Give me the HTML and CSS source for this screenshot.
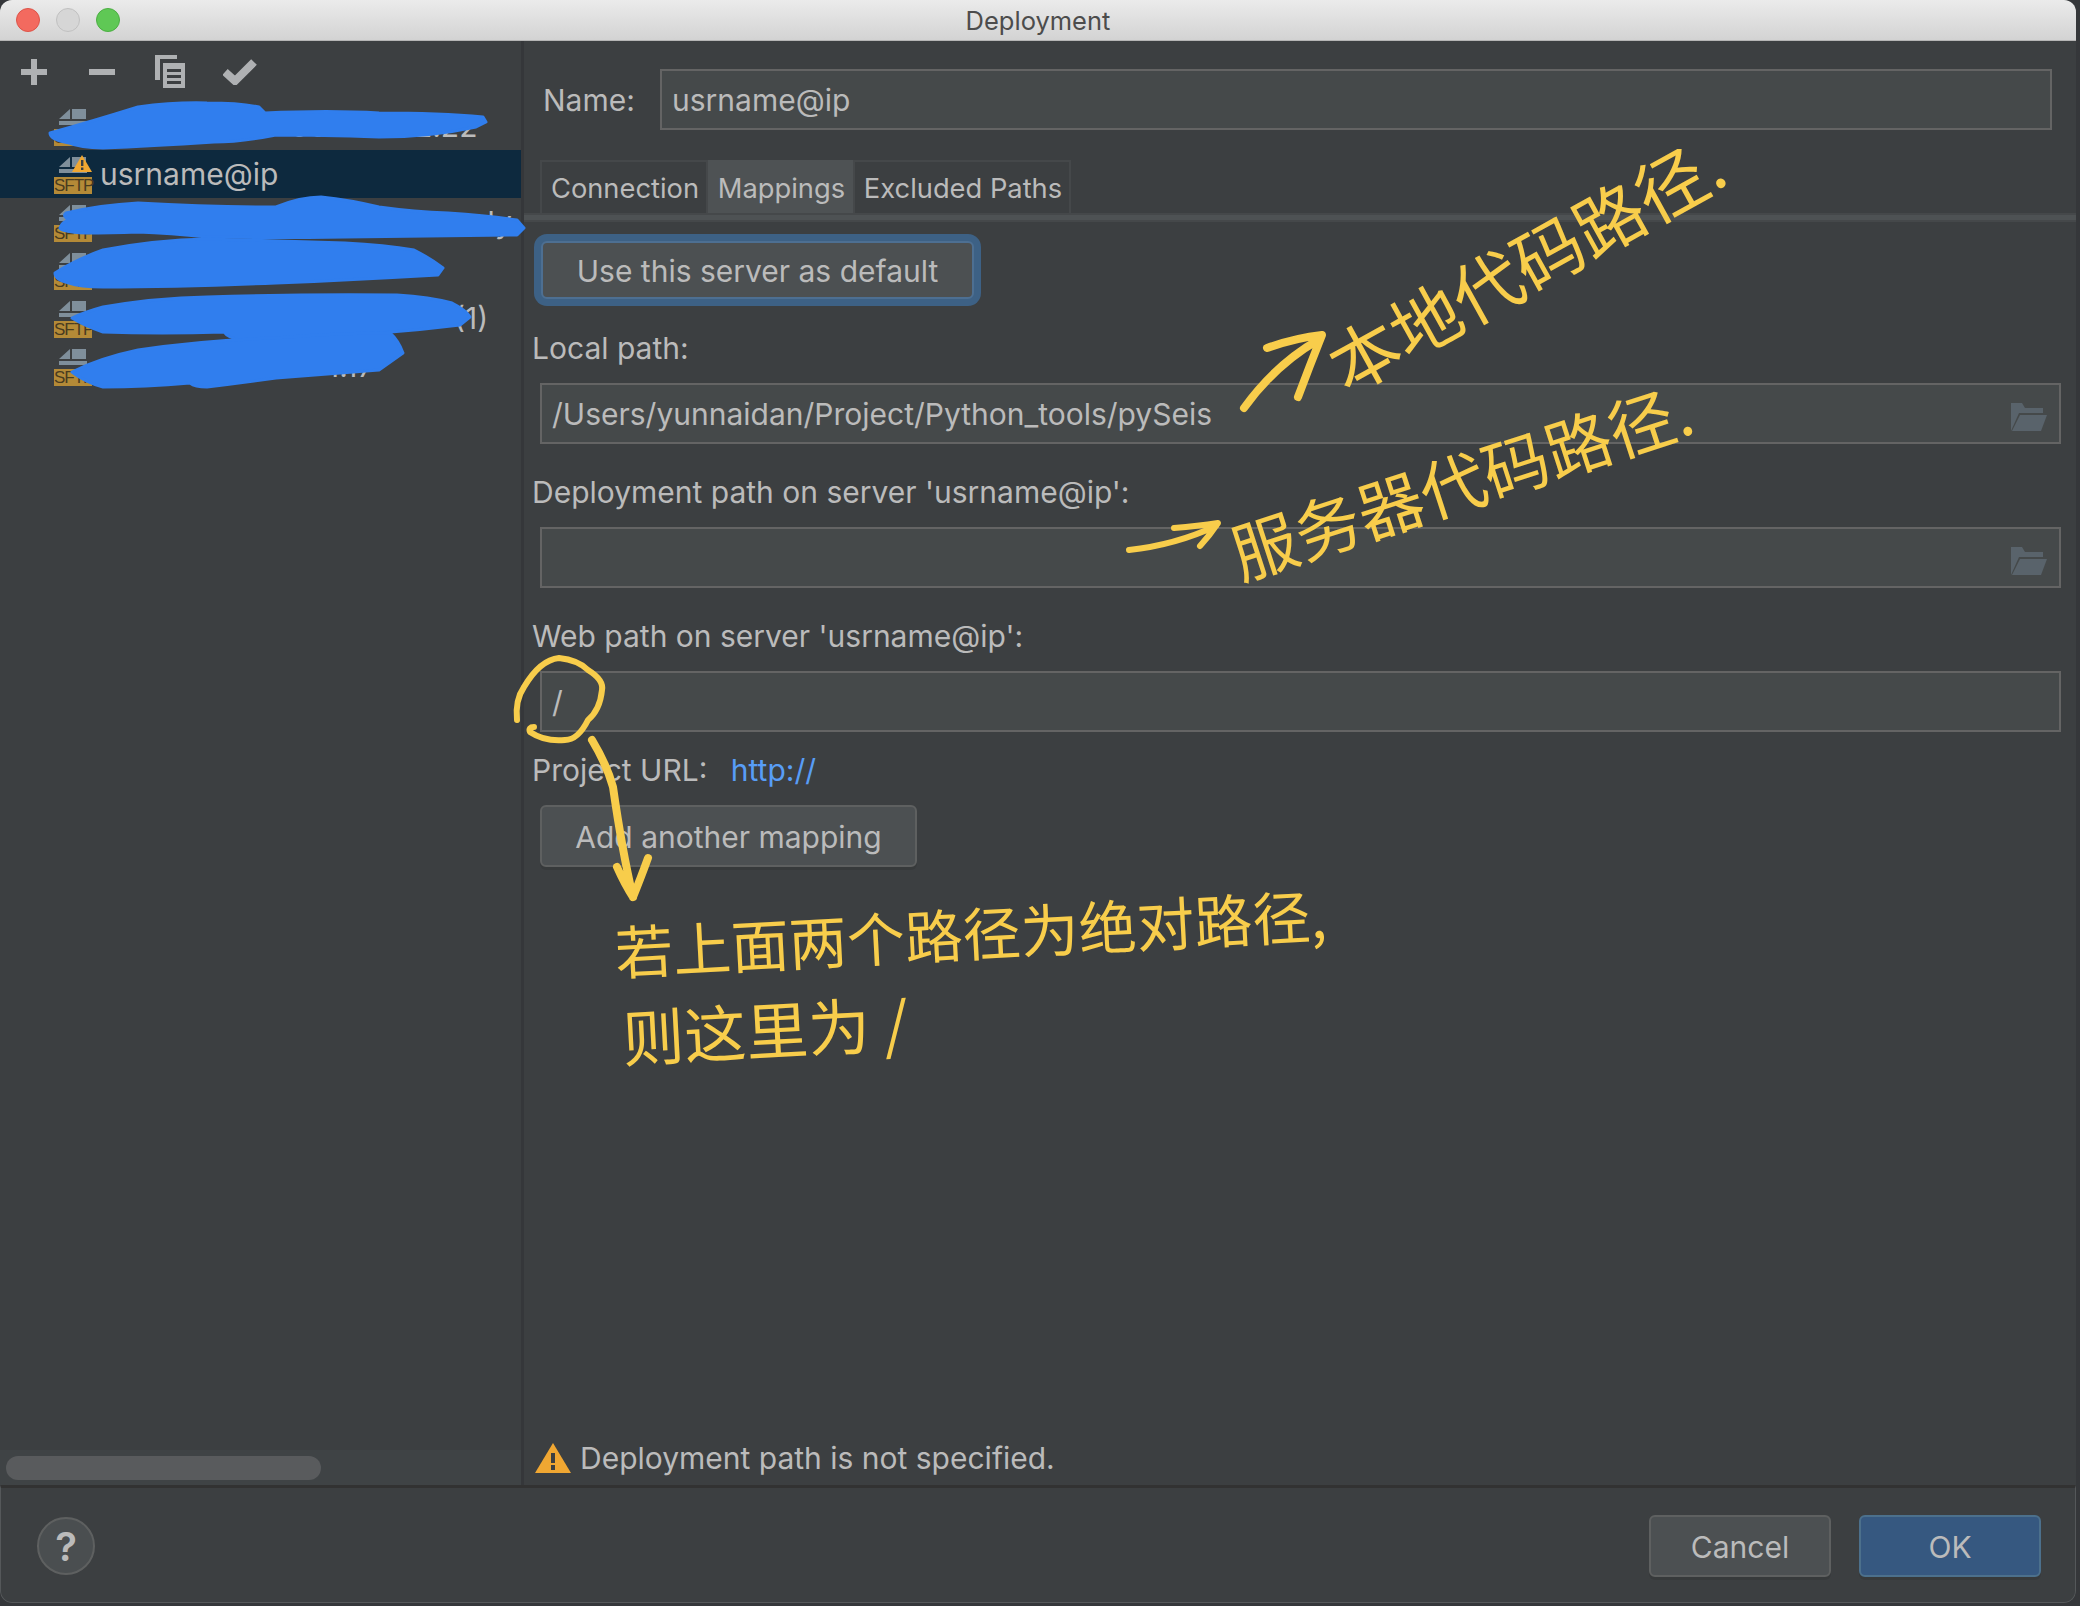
FILE: index.html
```html
<!DOCTYPE html>
<html lang="en">
<head>
    <meta charset="UTF-8">
    <meta name="viewport" content="width=device-width, initial-scale=1.0">
    <title>Deployment</title>
    <link rel="stylesheet" href="styles.css">
</head>
<body>

<div class="window">
    <header class="titlebar">
        <span class="light light-red"></span>
        <span class="light light-grey"></span>
        <span class="light light-green"></span>
        <span class="title">Deployment</span>
    </header>

    <div class="main">
        <aside class="sidebar">
            <div class="toolbar">
                <svg class="tool tool-add" viewBox="0 0 26 26" width="26" height="26"><path d="M13 0v26M0 13h26" /></svg>
                <svg class="tool tool-remove" viewBox="0 0 26 26" width="26" height="26"><path d="M0 13h26" /></svg>
                <svg class="tool-fill tool-copy" viewBox="0 0 30 33" width="30" height="33"><path d="M0 0h22v4H5v21H0zM8 8h22v25H8zM12 14v3h14v-3zM12 20v3h14v-3zM12 26v3h14v-3z" fill-rule="evenodd" /></svg>
                <svg class="tool tool-check" viewBox="0 0 34 26" width="34" height="26"><path d="M2 13l10 9L31 3" /></svg>
            </div>

            <!-- most of this list is painted over in the screenshot -->
            <ul class="server-list">
                <li class="server"><span class="server-icon"><svg class="file" viewBox="0 0 28 16" width="28" height="16"><path d="M0 10L11 0v10zM13 0h14v10H13zM0 12h28v4H0z" /></svg><span class="sftp">SFTP</span></span><span class="server-name part-first">00.0</span><span class="server-name part-second">2.22</span></li>
                <li class="server selected"><span class="server-icon"><svg class="file" viewBox="0 0 28 16" width="28" height="16"><path d="M0 10L11 0v10zM13 0h14v10H13zM0 12h28v4H0z" /></svg><svg class="mini-warn" viewBox="0 0 20 17" width="20" height="17"><path d="M10 0l10 17H0z" fill="#f0a732" /><path d="M9 5h2.400v6H9zM9 12.500h2.400v2.500H9z" fill="#3c3f41" /></svg><span class="sftp">SFTP</span></span><span class="server-name">usrname@ip</span></li>
                <li class="server"><span class="server-icon"><svg class="file" viewBox="0 0 28 16" width="28" height="16"><path d="M0 10L11 0v10zM13 0h14v10H13zM0 12h28v4H0z" /></svg><span class="sftp">SFTP</span></span><span class="server-name part-third">rnly</span></li>
                <li class="server"><span class="server-icon"><svg class="file" viewBox="0 0 28 16" width="28" height="16"><path d="M0 10L11 0v10zM13 0h14v10H13zM0 12h28v4H0z" /></svg><span class="sftp">SFTP</span></span></li>
                <li class="server"><span class="server-icon"><svg class="file" viewBox="0 0 28 16" width="28" height="16"><path d="M0 10L11 0v10zM13 0h14v10H13zM0 12h28v4H0z" /></svg><span class="sftp">SFTP</span></span><span class="server-name part-fifth">(1)</span></li>
                <li class="server"><span class="server-icon"><svg class="file" viewBox="0 0 28 16" width="28" height="16"><path d="M0 10L11 0v10zM13 0h14v10H13zM0 12h28v4H0z" /></svg><span class="sftp">SFTP</span></span><span class="server-name part-sixth">1.17</span></li>
            </ul>

            <div class="scroll-track"><div class="scroll-thumb"></div></div>
        </aside>

        <section class="panel">
            <div class="name-row">
                <label class="name-label">Name:</label>
                <div class="field">usrname@ip</div>
            </div>

            <div class="tabs">
                <span class="tab tab-connection">Connection</span>
                <span class="tab tab-mappings">Mappings</span>
                <span class="tab tab-excluded">Excluded Paths</span>
            </div>
            <div class="tab-strip"></div>

            <button class="btn btn-focus">Use this server as default</button>

            <div class="label first-label">Local path:</div>
            <div class="field">
                /Users/yunnaidan/Project/Python_tools/pySeis
                <svg class="folder" viewBox="0 0 36 28" width="36" height="28"><path d="M0 0h11l3 5h18v5H8L0 28z" /><path d="M9 12h27l-6 16H1z" /></svg>
            </div>

            <div class="label">Deployment path on server 'usrname@ip':</div>
            <div class="field">
                <svg class="folder" viewBox="0 0 36 28" width="36" height="28"><path d="M0 0h11l3 5h18v5H8L0 28z" /><path d="M9 12h27l-6 16H1z" /></svg>
            </div>

            <div class="label">Web path on server 'usrname@ip':</div>
            <div class="field">/</div>

            <div class="url-row">Project URL: <a class="url" href="#">http://</a></div>

            <button class="btn btn-mapping">Add another mapping</button>

            <div class="status">
                <svg viewBox="0 0 36 30" width="36" height="30"><path d="M18 0l18 30H0z" fill="#f0a732" /><path d="M16 10h4v10h-4zM16 22h4v5h-4z" fill="#3c3f41" /></svg>
                <span>Deployment path is not specified.</span>
            </div>
        </section>
    </div>

    <footer class="footer">
        <span class="help">?</span>
        <div class="footer-buttons">
            <button class="btn btn-footer">Cancel</button>
            <button class="btn btn-footer btn-ok">OK</button>
        </div>
    </footer>

    <!-- marks drawn on top of the window afterwards -->
    <svg class="marks" viewBox="0 0 2080 1606" width="2080" height="1606">
        <g class="redact">
            <path d="M50 133Q90 122 138 107Q175 102 207 103Q240 103 259 107L265 113Q330 110 379 113Q440 113 483 117L486 122L476 127Q430 137 379 137Q320 135 276 135Q240 142 214 142Q150 146 103 148Q80 148 69 143Q50 140 50 133z" />
            <path d="M66 213Q100 205 138 203Q210 207 276 207Q300 197 321 197Q350 200 379 207Q415 212 448 213Q490 216 517 220L524 228L517 235Q430 236 345 237Q270 238 207 237Q170 233 138 232Q110 233 86 233Q60 232 60 228Q62 222 69 220Q62 216 66 213z" />
            <path d="M55 273Q75 260 103 250Q155 240 207 239Q280 241 345 243Q385 245 414 250Q430 258 443 268L438 275Q350 280 276 283Q180 287 103 287Q80 287 69 283Q55 280 55 273z" />
            <path d="M72 318Q85 312 103 307Q155 298 207 297Q300 294 397 295Q430 297 452 303Q466 310 470 317L460 325Q420 330 379 333Q300 338 241 340Q228 338 224 332Q160 334 103 332Q85 326 72 318z" />
            <path d="M72 372Q100 358 138 350Q205 340 276 338Q335 333 390 333Q398 340 403 353L379 370Q330 374 276 378Q240 383 207 387Q195 387 190 383Q145 387 103 387Q85 382 72 372z" />
        </g>
        <g class="pen">
            <path class="pen-thick" d="M1244 408Q1275 365 1318 340M1267 348Q1295 338 1322 335Q1310 365 1298 397" />
            <path d="M1129 550Q1175 545 1216 526M1174 528Q1198 526 1218 523Q1210 535 1200 546" />
            <path d="M517 720Q515 700 524 687Q540 660 559 658Q578 660 588 670Q604 680 602 690Q600 710 588 720Q578 740 565 740Q545 742 530 732Q528 727 534 727" />
            <path class="pen-thick" d="M592 740Q607 765 613 787Q622 850 633 897M617 867Q625 885 633 897Q640 880 648 858" />
        </g>
    </svg>

    <span class="note note-local">本地代码路径.</span>
    <span class="note note-server">服务器代码路径.</span>
    <span class="note note-absolute">若上面两个路径为绝对路径,</span>
    <span class="note note-here">则这里为 /</span>
</div>

</body>
</html>
```

FILE: styles.css
```css
* {
    box-sizing: border-box;
}
body {
    margin: 0;
    background-color: #35373a;
    font-family: Inter, "Liberation Sans", sans-serif;
    font-size: 30px;
    color: #bbbbbb;
}
.window {
    position: relative;
    width: 2076px;
    height: 1603px;
    display: flex;
    flex-direction: column;
    background-color: #3c3f41;
    border-radius: 12px;
    overflow: hidden;
}

/* title bar */
.titlebar {
    position: relative;
    height: 41px;
    flex: none;
    display: flex;
    align-items: center;
    gap: 16px;
    padding-left: 16px;
    background: linear-gradient(#ebebeb, #d3d3d3);
    border-bottom: 1px solid #b5b5b5;
}
.light {
    width: 24px;
    height: 24px;
    border-radius: 50%;
}
.light-red {
    background-color: #f36a5f;
    border: 1px solid #dc5449;
}
.light-grey {
    background-color: #d6d6d6;
    border: 1px solid #c0c0c0;
}
.light-green {
    background-color: #5fc855;
    border: 1px solid #4cae43;
}
.title {
    position: absolute;
    left: 0;
    right: 0;
    text-align: center;
    font-size: 25.500px;
    color: #4c4c4c;
}

.main {
    flex: 1;
    display: flex;
    min-height: 0;
}

/* left side */
.sidebar {
    width: 524px;
    flex: none;
    display: flex;
    flex-direction: column;
    border-right: 3px solid #35373a;
}
.toolbar {
    height: 61px;
    flex: none;
    display: flex;
    align-items: center;
    padding-left: 21px;
}
.tool {
    fill: none;
    stroke: #afb1b3;
    stroke-width: 6;
}
.tool-fill {
    fill: #afb1b3;
}
.tool-remove {
    margin-left: 42px;
}
.tool-copy {
    margin-left: 40px;
}
.tool-check {
    margin-left: 38px;
    stroke-width: 8;
}
.server-list {
    list-style: none;
    margin: 0;
    padding: 0;
    flex: 1;
}
.server {
    height: 48px;
    display: flex;
    align-items: center;
    padding-left: 54px;
    white-space: nowrap;
    overflow: hidden;
}
.server.selected {
    background-color: #0d293e;
}
.server-icon {
    position: relative;
    width: 38px;
    height: 40px;
    flex: none;
}
.file {
    position: absolute;
    left: 5px;
    top: 3px;
    fill: #7f8f9b;
}
.mini-warn {
    position: absolute;
    left: 18px;
    top: 1px;
}
.sftp {
    position: absolute;
    left: 0;
    bottom: 0;
    width: 38px;
    height: 17px;
    background-color: #b48a37;
    color: #4a3c20;
    font-family: "Liberation Sans", sans-serif;
    font-size: 17px;
    letter-spacing: -1px;
    line-height: 17px;
    text-align: center;
}
.server-name {
    margin-left: 8px;
}
.part-first {
    margin-left: 198px;
}
.part-second {
    margin-left: 60px;
}
.part-third {
    margin-left: 366px;
}
.part-fifth {
    margin-left: 362px;
}
.part-sixth {
    margin-left: 235px;
}
.scroll-track {
    height: 35px;
    flex: none;
    padding: 6px 6px 5px;
    background-color: #3f4345;
}
.scroll-thumb {
    width: 315px;
    height: 24px;
    border-radius: 12px;
    background-color: #595b5d;
}

/* right side */
.panel {
    flex: 1;
    display: flex;
    flex-direction: column;
    align-items: flex-start;
    padding: 28px 15px 9px 8px;
}
.name-row {
    width: 100%;
    display: flex;
    align-items: center;
    padding-left: 11px;
    padding-right: 9px;
}
.name-label {
    width: 117px;
    flex: none;
}
.field {
    position: relative;
    width: calc(100% - 8px);
    height: 61px;
    margin-left: 8px;
    padding-left: 10px;
    display: flex;
    align-items: center;
    background-color: #45494a;
    border: 2px solid #646464;
    flex: none;
}
.name-row .field {
    flex: 1;
    width: auto;
    margin-left: 0;
}
.folder {
    position: absolute;
    right: 12px;
    top: 18px;
    fill: #59636b;
}
.tabs {
    display: flex;
    height: 53px;
    margin-top: 30px;
    margin-left: 8px;
    flex: none;
    font-size: 27.300px;
}
.tab {
    display: flex;
    align-items: center;
    justify-content: center;
    padding: 2px 0 0 2px;
    border: 2px solid #45484a;
    border-bottom: none;
}
.tab-connection {
    width: 168px;
}
.tab-mappings {
    width: 145px;
    background-color: #4e5254;
    border-color: #4e5254;
}
.tab-excluded {
    width: 218px;
}
.tab-strip {
    align-self: stretch;
    height: 9px;
    flex: none;
    margin: 0 -15px 0 -8px;
    background-color: #4e5254;
    border-top: 2px solid #45484a;
    border-bottom: 2px solid #45484a;
}
.btn {
    font: inherit;
    color: inherit;
    background-color: #4c5052;
    border: 2px solid #5e6060;
    border-radius: 6px;
    padding: 2px 0 0;
    flex: none;
    box-shadow: 0 3px 0 rgba(0, 0, 0, 0.08);
}
.btn-focus {
    width: 433px;
    height: 58px;
    margin: 19px 0 0 9px;
    border-color: #4d6f92;
    box-shadow: 0 0 0 7px #3d6185;
}
.label {
    height: 36px;
    line-height: 36px;
    padding-top: 1px;
    margin-top: 29px;
    margin-bottom: 18px;
    flex: none;
}
.label.first-label {
    margin-top: 30px;
}
.url-row {
    height: 36px;
    line-height: 36px;
    margin-top: 20px;
    flex: none;
}
.url {
    color: #589df6;
    text-decoration: none;
    margin-left: 15px;
}
.btn-mapping {
    width: 377px;
    height: 62px;
    margin: 17px 0 0 8px;
}
.status {
    margin-top: auto;
    display: flex;
    align-items: center;
    gap: 9px;
    padding-left: 3px;
    padding-top: 1px;
}

/* bottom bar */
.footer {
    height: 118px;
    flex: none;
    display: flex;
    align-items: center;
    justify-content: space-between;
    padding: 2px 34px 0 36px;
    border: 1px solid #55585a;
    border-top: 3px solid #323232;
    border-radius: 0 0 12px 12px;
}
.help {
    width: 58px;
    height: 58px;
    display: flex;
    align-items: center;
    justify-content: center;
    border-radius: 50%;
    background-color: #4a4e50;
    border: 2px solid #5e6060;
    font-size: 40px;
    font-weight: 600;
}
.footer-buttons {
    display: flex;
    gap: 28px;
}
.btn-footer {
    width: 182px;
    height: 62px;
}
.btn-ok {
    background-color: #365880;
    border-color: #4c708c;
}

/* things added on top of the window */
.marks {
    position: absolute;
    left: 0;
    top: 0;
    pointer-events: none;
}
.redact path {
    fill: #307eee;
    stroke: #307eee;
    stroke-width: 3;
    stroke-linejoin: round;
}
.pen path {
    fill: none;
    stroke: #f8cd4b;
    stroke-width: 6;
    stroke-linecap: round;
    stroke-linejoin: round;
}
.pen .pen-thick {
    stroke-width: 8;
}
.note {
    position: absolute;
    color: #f8cd4b;
    font-family: "Noto Sans CJK SC", sans-serif;
    white-space: nowrap;
    transform-origin: left center;
}
.note-local {
    left: 1332px;
    top: 318px;
    font-size: 70px;
    transform: rotate(-29deg);
}
.note-server {
    left: 1232px;
    top: 505px;
    font-size: 66px;
    transform: rotate(-18deg);
}
.note-absolute {
    left: 615px;
    top: 908px;
    font-size: 58px;
    transform: rotate(-3deg);
}
.note-here {
    left: 622px;
    top: 990px;
    font-size: 62px;
    transform: rotate(-3deg);
}
```
